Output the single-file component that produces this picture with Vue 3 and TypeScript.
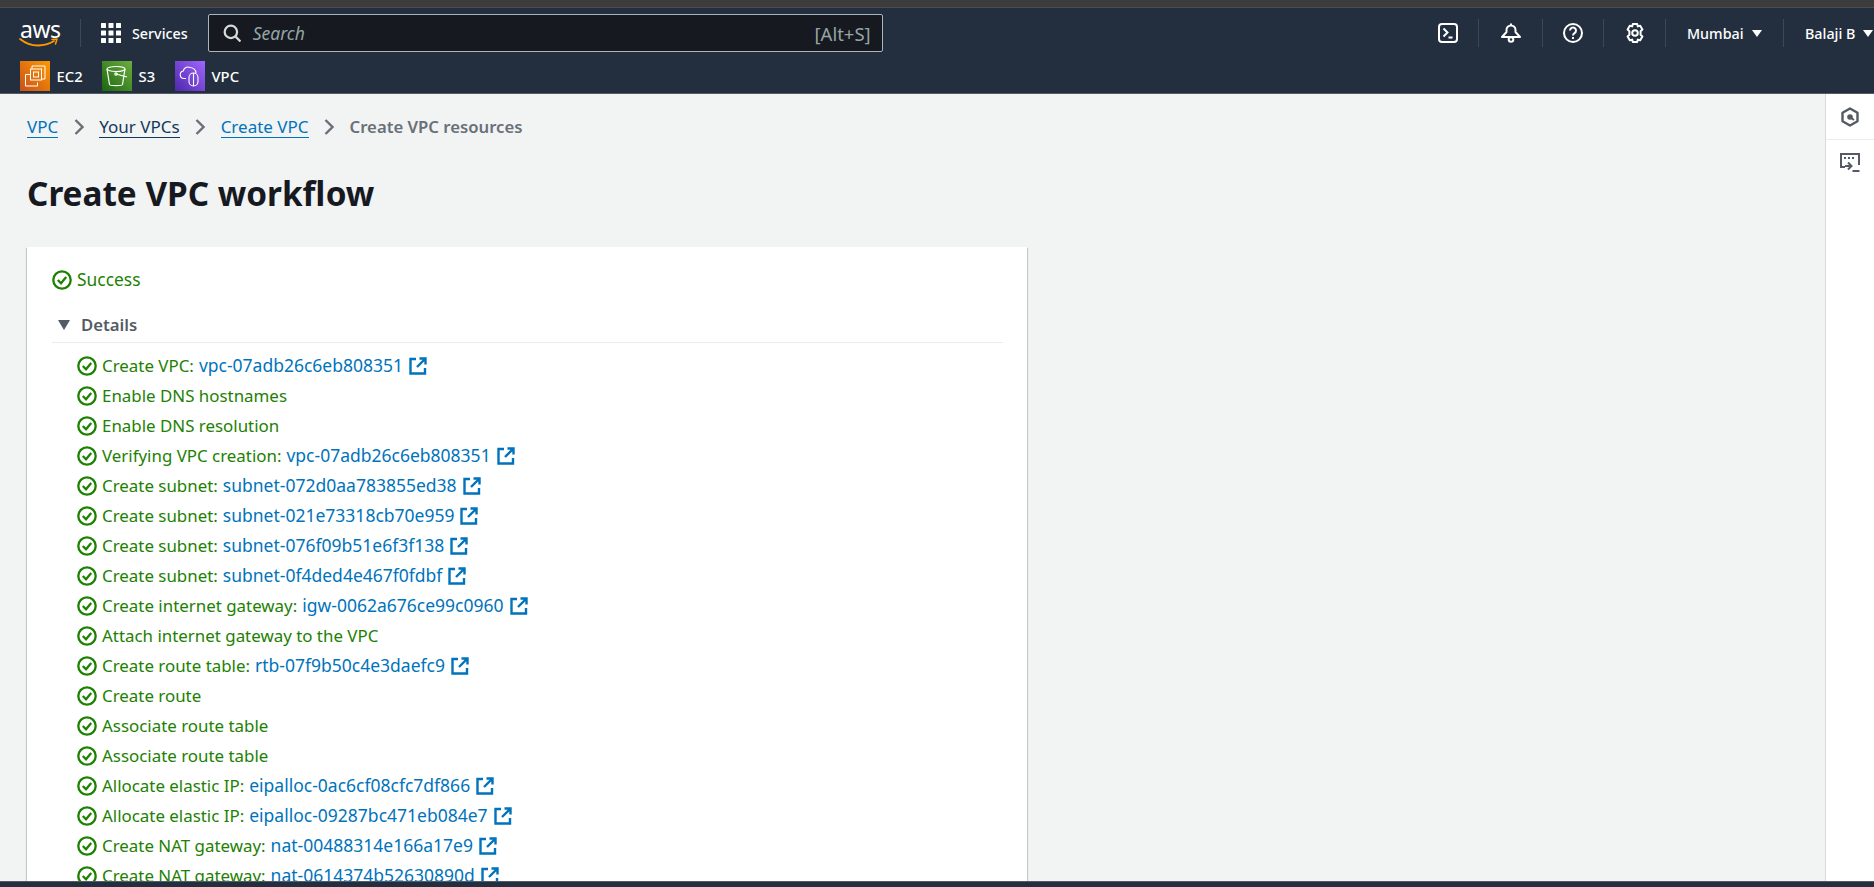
<script setup lang="ts">
interface Row {
  label: string;
  link?: string;
}

const rows: Row[] = [
  { label: "Create VPC:", link: "vpc-07adb26c6eb808351" },
  { label: "Enable DNS hostnames" },
  { label: "Enable DNS resolution" },
  { label: "Verifying VPC creation:", link: "vpc-07adb26c6eb808351" },
  { label: "Create subnet:", link: "subnet-072d0aa783855ed38" },
  { label: "Create subnet:", link: "subnet-021e73318cb70e959" },
  { label: "Create subnet:", link: "subnet-076f09b51e6f3f138" },
  { label: "Create subnet:", link: "subnet-0f4ded4e467f0fdbf" },
  { label: "Create internet gateway:", link: "igw-0062a676ce99c0960" },
  { label: "Attach internet gateway to the VPC" },
  { label: "Create route table:", link: "rtb-07f9b50c4e3daefc9" },
  { label: "Create route" },
  { label: "Associate route table" },
  { label: "Associate route table" },
  { label: "Allocate elastic IP:", link: "eipalloc-0ac6cf08cfc7df866" },
  { label: "Allocate elastic IP:", link: "eipalloc-09287bc471eb084e7" },
  { label: "Create NAT gateway:", link: "nat-00488314e166a17e9" },
  { label: "Create NAT gateway:", link: "nat-0614374b52630890d" },
];

const crumbs = [
  { text: "VPC", dark: false },
  { text: "Your VPCs", dark: true },
  { text: "Create VPC", dark: false },
];
</script>

<template>
  <div class="page">
    <div class="chrome-strip"></div>
    <header class="header">
      <div class="top-row">
        <div class="logo">
          <span class="logo-text">aws</span>
          <svg viewBox="0 0 40 9" width="40" height="9" fill="none" stroke="#f90" stroke-linecap="round" stroke-linejoin="round">
            <path d="M1 1c5 4 11 6.500 18 6.500 6 0 11-1.500 16-4.500" stroke-width="1.800" />
            <path d="M33 1.500l5-.5-1.500 5" stroke-width="1.500" />
          </svg>
        </div>
        <span class="sep logo-sep"></span>
        <div class="services">
          <svg viewBox="0 0 20 20" width="20" height="20" fill="#fff">
            <rect v-for="n in 9" :key="n" :x="((n - 1) % 3) * 7.500" :y="Math.floor((n - 1) / 3) * 7.500" width="5" height="5" rx="0.500" />
          </svg>
          <span>Services</span>
        </div>
        <div class="search">
          <svg viewBox="0 0 16 16" width="18" height="18" fill="none" stroke="#d5dbdb" stroke-width="2">
            <circle cx="7" cy="7" r="5.500" />
            <path d="M11 11l4.500 4.500" />
          </svg>
          <span class="search-text">Search</span>
          <span class="search-key">[Alt+S]</span>
        </div>
        <div class="right-tools">
          <div class="tool first">
            <svg viewBox="0 0 20 20" width="20" height="20" fill="none" stroke="#fff" stroke-width="2">
              <rect x="1" y="1" width="18" height="18" rx="3" />
              <path d="M5.500 5.500l4 4-4 4M10.500 14.500h4" />
            </svg>
          </div>
          <div class="tool bell">
            <svg viewBox="0 0 20 20" width="20" height="20" fill="none" stroke="#fff" stroke-width="2" stroke-linejoin="round">
              <path d="M1 14h18l-4.500-5V7a4.500 4.500 0 0 0-9 0v2z" />
              <circle cx="10" cy="16.500" r="2.300" />
              <path d="M10 0.500v2" />
            </svg>
          </div>
          <div class="tool help">
            <svg viewBox="0 0 20 20" width="20" height="20" fill="none" stroke="#fff" stroke-width="2">
              <circle cx="10" cy="10" r="9" />
              <path d="M7 7.500a3 3 0 1 1 4.500 2.600c-1 .6-1.500 1.200-1.500 2.400" />
              <path d="M10 14v2" />
            </svg>
          </div>
          <div class="tool gear">
            <svg viewBox="0 0 20 20" width="20" height="20" fill="none" stroke="#fff" stroke-width="2" stroke-linejoin="round">
              <path d="M7.800 1h4.400l.6 2.400 2.400-.7 2.200 3.800-1.800 1.700v3.600l1.800 1.700-2.200 3.800-2.400-.7-.6 2.400H7.800l-.6-2.400-2.400.7-2.200-3.800 1.800-1.700V8.200L2.600 6.500l2.200-3.800 2.400.7z" />
              <circle cx="10" cy="10" r="2.800" />
            </svg>
          </div>
          <div class="menu region">Mumbai <i class="caret"></i></div>
          <div class="menu user">Balaji B <i class="caret"></i></div>
        </div>
      </div>
      <div class="fav-row">
        <div class="fav ec2-item">
          <span class="fav-icon ec2">
            <svg viewBox="0 0 30 30" width="30" height="30" fill="none" stroke="#fff" stroke-width="1">
              <path d="M12 8V5h13v13h-3" />
              <path d="M10 13.500H5.500V25h12v-3.500" />
              <rect x="10.500" y="8" width="11" height="11" />
              <rect x="13.500" y="11" width="5" height="5" />
            </svg>
          </span>
          <span>EC2</span>
        </div>
        <div class="fav s3-item">
          <span class="fav-icon s3">
            <svg viewBox="0 0 30 30" width="30" height="30" fill="none" stroke="#fff" stroke-width="1.200">
              <ellipse cx="14" cy="8" rx="9" ry="2.500" />
              <path d="M5 8l2.500 15.500c.3 1.500 12.700 1.500 13 0L23 8" />
              <path d="M14 13l11 3" />
              <circle cx="14" cy="13" r="1.200" />
            </svg>
          </span>
          <span>S3</span>
        </div>
        <div class="fav vpc-item">
          <span class="fav-icon vpc">
            <svg viewBox="0 0 30 30" width="30" height="30" fill="none" stroke="#fff" stroke-width="1.100">
              <path d="M11 17.500H9a3.800 3.800 0 0 1-.8-7.500C9 7 12 5 15 6.500c2.500 0 6 2 6 5.500" />
              <rect x="14" y="12" width="9" height="13" rx="4.500" />
              <path d="M18.500 12v13" />
            </svg>
          </span>
          <span>VPC</span>
        </div>
      </div>
    </header>

    <div class="body">
      <main class="content">
        <nav class="crumbs">
          <template v-for="c in crumbs" :key="c.text">
            <a class="crumb" :class="{ dark: c.dark }">{{ c.text }}</a>
            <svg class="chev" viewBox="0 0 10 16" width="10" height="16" fill="none" stroke="#687078" stroke-width="2.400">
              <path d="M1.500 1l7 7-7 7" />
            </svg>
          </template>
          <span class="crumb-current">Create VPC resources</span>
        </nav>
        <h1 class="title">Create VPC workflow</h1>
        <section class="card">
          <div class="status">
            <svg class="check" viewBox="0 0 20 20" width="20" height="20" fill="none" stroke="#1d8102" stroke-width="2.300">
              <circle cx="10" cy="10" r="8.700" />
              <path d="M5.800 10l3.200 3.200 5.200-6.200" />
            </svg>
            <span class="status-text">Success</span>
          </div>
          <div class="details-head">
            <i class="details-caret"></i>
            <span>Details</span>
          </div>
          <ul class="rows">
            <li v-for="(r, i) in rows" :key="i" class="row">
              <svg class="check" viewBox="0 0 20 20" width="20" height="20" fill="none" stroke="#1d8102" stroke-width="2.300">
                <circle cx="10" cy="10" r="8.700" />
                <path d="M5.800 10l3.200 3.200 5.200-6.200" />
              </svg>
              <span class="row-label">{{ r.label }}</span>
              <template v-if="r.link">
                <a class="row-link">{{ r.link }}</a>
                <svg class="ext" viewBox="0 0 18 18" width="18" height="18" fill="none" stroke="#0073bb" stroke-width="2.400">
                  <path d="M7 2H1.500v14.500H16V11" />
                  <path d="M10.500 1.500h6v6M16 2L8 10" />
                </svg>
              </template>
            </li>
          </ul>
        </section>
      </main>
      <aside class="side">
        <div class="side-btn">
          <svg viewBox="0 0 20 20" width="20" height="20" fill="none" stroke="#545b64" stroke-width="2.400" stroke-linejoin="round">
            <path d="M10 1.500l7.500 4.200v8.600L10 18.500l-7.500-4.200V5.700z" />
            <circle cx="10" cy="10" r="2.800" fill="#545b64" stroke="none" />
            <path d="M10 10l4 3" stroke-width="2" />
          </svg>
        </div>
        <div class="side-btn">
          <svg viewBox="0 0 20 20" width="20" height="20" fill="none" stroke="#545b64" stroke-width="2">
            <path d="M5 14H1V1h18v11" />
            <path d="M4 5h2M8 5h2M12 5h2" />
            <path d="M5 13h6M8 9.500l3.500 3.500L8 16.500" />
            <path d="M12.500 18h7" />
          </svg>
        </div>
      </aside>
    </div>
    <footer class="footer"></footer>
  </div>
</template>

<style>
html, body { margin: 0; overflow: hidden; }
</style>

<style scoped>
.page {
  display: flex; flex-direction: column;
  width: 1874px; height: 887px;
  overflow: hidden;
  background: #f2f3f3;
  font-family: "Noto Sans", "Open Sans", sans-serif;
}

.chrome-strip {
  flex: none;
  height: 7px;
  background: #3c3c3c;
  border-bottom: 1px solid #4d4d4d;
}

.header {
  flex: none;
  height: 86px;
  box-sizing: border-box;
  background: #232f3e;
  border-bottom: 1px solid #545b64;
  color: #fff;
  padding: 6px 0 0 20px;
}

.top-row {
  display: flex; align-items: center;
  height: 38px;
}

.logo {
  flex: none;
  display: flex; flex-direction: column;
  width: 40px;
}
.logo svg { display: block; margin-top: -1px; margin-left: -1px; }
.logo-text {
  font-size: 23px; line-height: 20px;
  font-weight: 400;
  color: #fff;
  letter-spacing: -0.5px;
}

.sep { width: 1px; height: 28px; background: #414750; }
.logo-sep { margin: 0 20px; }

.services {
  display: flex; align-items: center; gap: 11px;
  font-size: 14.300px; font-weight: 500;
  margin-right: 20px;
}

.search {
  display: flex; align-items: center;
  box-sizing: border-box;
  width: 675px; height: 38px;
  padding: 0 11px 0 14px;
  background: #16191f;
  border: 1px solid #aab7b8;
  border-radius: 2px;
}
.search-text {
  margin-left: 12px;
  font-size: 17.500px; font-style: italic;
  color: #95a5a6;
}
.search-key {
  margin-left: auto;
  font-size: 18.500px;
  color: #95a5a6;
}

.right-tools {
  display: flex; align-items: center;
  margin-left: auto;
  height: 28px;
  white-space: nowrap;
}
.tool {
  display: flex; align-items: center; justify-content: center;
  box-sizing: border-box;
  height: 28px;
  border-left: 1px solid #414750;
}
.tool.first { width: 60px; border-left: none; }
.tool.bell { width: 64px; }
.tool.help { width: 61px; }
.tool.gear { width: 62px; }

.menu {
  display: flex; align-items: center; gap: 8px;
  box-sizing: border-box;
  height: 28px;
  padding-left: 21px;
  border-left: 1px solid #414750;
  font-size: 14.300px; font-weight: 500;
}
.region { width: 118px; }
.user { width: 91px; }

.caret {
  width: 0; height: 0;
  border-left: 5px solid transparent;
  border-right: 5px solid transparent;
  border-top: 7px solid #fff;
}

.fav-row {
  display: flex; align-items: center;
  height: 30px;
  margin-top: 9px;
  font-size: 14.800px; font-weight: 500;
}
.fav { display: flex; align-items: center; gap: 6.500px; }
.ec2-item { width: 82px; }
.s3-item { width: 73px; }
.fav-icon { display: block; width: 30px; height: 30px; }
.fav-icon svg { display: block; }
.ec2 { background: linear-gradient(45deg, #c8511b, #f90); }
.s3 { background: linear-gradient(45deg, #1b660f, #6cae3e); }
.vpc { background: linear-gradient(45deg, #4d27aa, #a166ff); }

.body {
  flex: 1; min-height: 0;
  display: flex;
  overflow: hidden;
}

.content {
  flex: 1; min-width: 0;
  padding: 21px 0 0 27px;
}

.crumbs {
  display: flex; align-items: center;
  height: 24px;
  font-size: 17px;
}
.crumb {
  color: #0073bb;
  line-height: 21px;
  border-bottom: 1px solid #0073bb;
}
.crumb.dark { color: #12395c; border-bottom-color: #12395c; }
.chev { margin: 0 15.500px; }
.crumb-current { color: #687078; font-weight: 600; font-size: 16.700px; margin-bottom: 2px; }

.title {
  margin: 31px 0 0;
  font-size: 33.300px; line-height: 46px;
  font-weight: 700;
  color: #16191f;
}

.card {
  box-sizing: border-box;
  width: 1000px;
  height: 700px;
  margin-top: 31px;
  padding: 21px 24px 0 25px;
  background: #fff;
  box-shadow: 0 1px 1px 0 rgba(0, 28, 36, 0.3), 1px 1px 1px 0 rgba(0, 28, 36, 0.15), -1px 1px 1px 0 rgba(0, 28, 36, 0.15);
}

.status {
  display: flex; align-items: center; gap: 5px;
  height: 24px;
  color: #1d8102;
  font-size: 17.400px;
}
.status-text { margin-bottom: 2px; }

.details-head {
  display: flex; align-items: center; gap: 11px;
  height: 36px;
  margin-top: 15px;
  box-sizing: border-box;
  padding-left: 6px;
  border-bottom: 1px solid #eaeded;
  font-size: 16.700px; font-weight: 600;
  color: #545b64;
}
.details-caret {
  width: 0; height: 0;
  border-left: 6px solid transparent;
  border-right: 6px solid transparent;
  border-top: 10px solid #545b64;
}

.rows {
  list-style: none;
  margin: 0; padding: 8px 0 0 25px;
}
.row {
  display: flex; align-items: center;
  height: 30px;
  white-space: nowrap;
}
.row .check { margin-right: 5px; }
.row-label { color: #1d8102; font-size: 16.900px; margin-bottom: 2px; }
.row-link { color: #0073bb; font-size: 17.500px; margin-left: 5px; margin-bottom: 2px; }
.ext { margin-left: 6px; }
.check, .ext { flex: none; }

.side {
  flex: none;
  box-sizing: border-box;
  width: 49px;
  background: #fff;
  border-left: 1px solid #d5dbdb;
}
.side-btn {
  display: flex; align-items: center; justify-content: center;
  height: 45px;
  border-bottom: 1px solid #eaeded;
}
.side-btn:last-child { border-bottom: none; }

.footer {
  flex: none;
  height: 5px;
  background: #232f3e;
  border-top: 1px solid #545b64;
}
</style>
